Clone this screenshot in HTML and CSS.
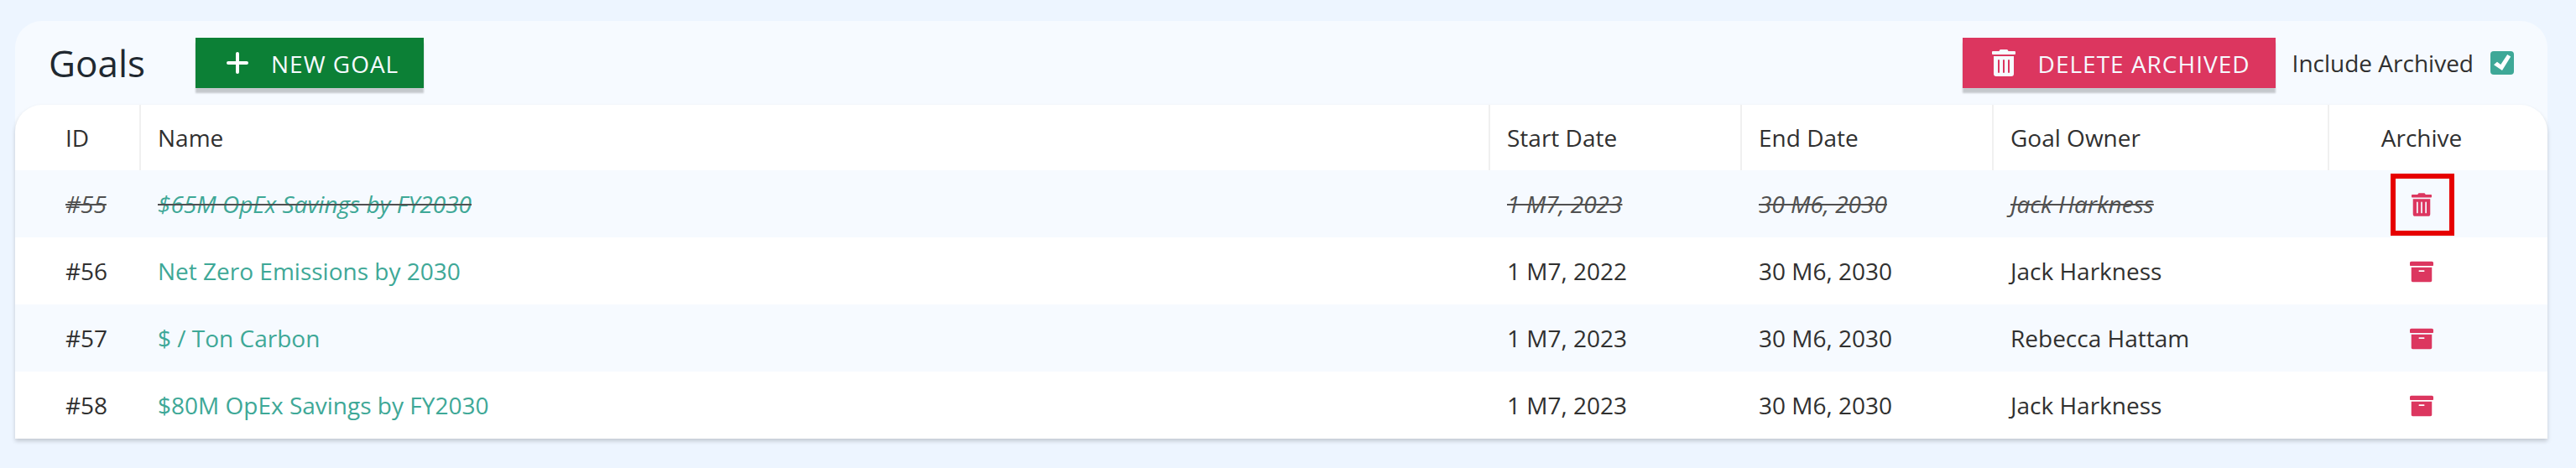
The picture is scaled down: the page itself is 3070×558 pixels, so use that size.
FILE: index.html
```html
<!DOCTYPE html>
<html lang="en">
<head>
<meta charset="utf-8">
<title>Goals</title>
<link rel="stylesheet" href="styles.css">
</head>
<body>
<svg class="sprite" width="0" height="0" aria-hidden="true">
  <symbol id="trash" viewBox="0 0 448 512"><path d="M32 464a48 48 0 0 0 48 48h288a48 48 0 0 0 48-48V128H32zm272-256a16 16 0 0 1 32 0v224a16 16 0 0 1-32 0zm-96 0a16 16 0 0 1 32 0v224a16 16 0 0 1-32 0zm-96 0a16 16 0 0 1 32 0v224a16 16 0 0 1-32 0zM432 32H312l-9.400-18.700A24 24 0 0 0 281.100 0H166.800a23.720 23.720 0 0 0-21.400 13.300L136 32H16A16 16 0 0 0 0 48v32a16 16 0 0 0 16 16h416a16 16 0 0 0 16-16V48a16 16 0 0 0-16-16z"/></symbol>
  <symbol id="archive" viewBox="0 0 512 512"><path d="M32 448c0 17.700 14.300 32 32 32h384c17.700 0 32-14.300 32-32V160H32v288zm160-212c0-6.600 5.400-12 12-12h104c6.600 0 12 5.400 12 12v8c0 6.600-5.400 12-12 12H204c-6.600 0-12-5.400-12-12v-8zM480 32H32C14.300 32 0 46.300 0 64v48c0 8.800 7.200 16 16 16h480c8.800 0 16-7.200 16-16V64c0-17.700-14.300-32-32-32z"/></symbol>
</svg>
<main class="panel">
  <header class="toolbar">
    <h1 class="title">Goals</h1>
    <button class="btn btn-new"><svg class="plus" viewBox="0 0 26 26"><path d="M13 2v22M2 13h22"/></svg><span class="btn-text">New Goal</span></button>
    <button class="btn btn-delete"><svg class="bin"><use href="#trash"/></svg><span class="btn-text">Delete Archived</span></button>
    <label class="include">Include Archived<span class="check"><svg viewBox="0 0 28 28"><path d="M4 16.200l4-3.400 4.300 3.200L20.200 4l4 2.400L14 23z"/></svg></span></label>
  </header>
  <section class="table">
    <div class="row head"><div>ID</div><div>Name</div><div>Start Date</div><div>End Date</div><div>Goal Owner</div><div class="action">Archive</div></div>
    <div class="row alt archived"><div><s>#55</s></div><div><s><a class="link">$65M OpEx Savings by FY2030</a></s></div><div><s>1 M7, 2023</s></div><div><s>30 M6, 2030</s></div><div><s>Jack Harkness</s></div><div class="action"><span class="highlight"><svg class="icon-trash"><use href="#trash"/></svg></span></div></div>
    <div class="row"><div>#56</div><div><a class="link">Net Zero Emissions by 2030</a></div><div>1 M7, 2022</div><div>30 M6, 2030</div><div>Jack Harkness</div><div class="action"><svg class="icon-box"><use href="#archive"/></svg></div></div>
    <div class="row alt"><div>#57</div><div><a class="link">$ / Ton Carbon</a></div><div>1 M7, 2023</div><div>30 M6, 2030</div><div>Rebecca Hattam</div><div class="action"><svg class="icon-box"><use href="#archive"/></svg></div></div>
    <div class="row"><div>#58</div><div><a class="link">$80M OpEx Savings by FY2030</a></div><div>1 M7, 2023</div><div>30 M6, 2030</div><div>Jack Harkness</div><div class="action"><svg class="icon-box"><use href="#archive"/></svg></div></div>
  </section>
</main>
</body>
</html>
```
FILE: styles.css
```css
* { box-sizing: border-box; }
body { margin: 0; height: 558px; padding: 25px 34px 35px 18px; background: #edf5ff; font-family: "Open Sans", "Noto Sans", sans-serif; font-size: 28px; color: #303030; overflow: hidden; }
.sprite { display: block; width: 0; height: 0; }
.panel { background: #f6faff; border-radius: 32px 32px 0 0; }
.toolbar { display: flex; align-items: center; height: 100px; padding-left: 40px; padding-right: 40px; }
.title { margin: 0 60px 0 0; width: 115px; font-size: 44px; line-height: 60px; font-weight: 400; color: #202830; }
.btn { display: flex; align-items: center; height: 60px; border: 0; padding: 0; color: #f6faff; font: 400 28px/60px "Open Sans", sans-serif; letter-spacing: 1px; text-transform: uppercase; box-shadow: 0 6px 2px rgba(0,0,0,.2); white-space: nowrap; }
.btn-text { padding-top: 2px; }
.btn-new { width: 272px; padding-left: 37px; background: #0c8036; }
.btn-delete { width: 373px; margin-left: auto; padding-left: 35px; background: #dc365f; }
.plus { width: 26px; height: 26px; margin-right: 27px; fill: none; stroke: #fff; stroke-width: 4; stroke-linecap: round; }
.bin { width: 28px; height: 32px; margin-right: 27px; fill: #f6faff; }
.include { display: flex; align-items: center; margin-left: 20px; }
.check { display: flex; width: 28px; height: 28px; margin-left: 20px; border-radius: 4px; background: #3ea897; }
.check svg { width: 28px; height: 28px; fill: #fff; }
.table { background: #fff; border-radius: 32px 32px 0 0; box-shadow: 0 3px 5px rgba(0,0,0,.18); overflow: hidden; }
.row { display: grid; grid-template-columns: 150px 1608px 300px 300px 400px 260px; height: 80px; }
.row > div { display: flex; align-items: center; padding-left: 20px; }
.row > div:first-child { padding-left: 60px; }
.row > .action { justify-content: center; padding: 0 40px 0 0; }
.head { height: 78px; }
.head > div:not(:last-child) { border-right: 2px solid #f0f0f0; }
.alt { background: #f6faff; }
.link { color: #3ea897; }
.archived { font-style: italic; color: #505050; }
.highlight { display: flex; align-items: center; justify-content: center; width: 76px; height: 74px; margin: 2px 0 0 2px; border: 6px solid #e60000; }
.icon-trash { width: 24px; height: 28px; margin-right: 2px; fill: #dc365f; }
.icon-box { width: 28px; height: 28px; margin-top: 2px; fill: #dc365f; }
```
